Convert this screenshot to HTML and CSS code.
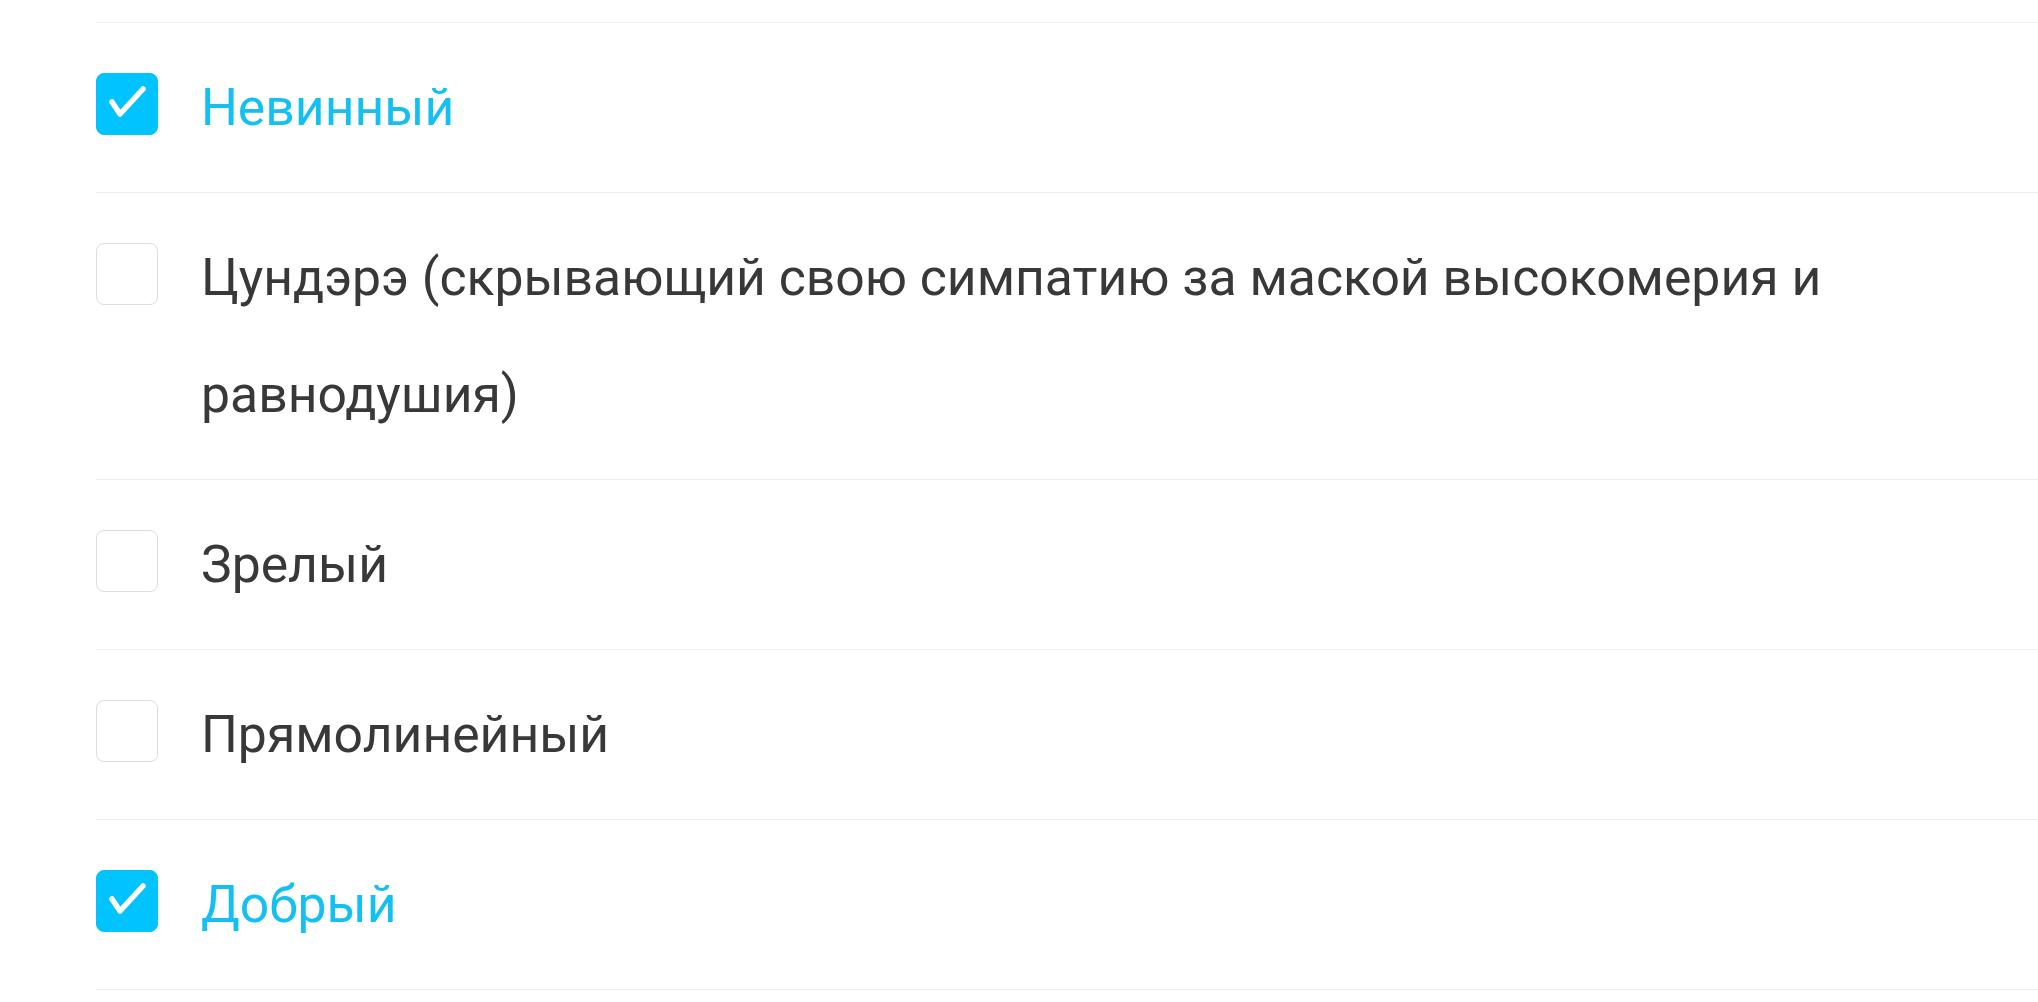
FILE: index.html
```html
<!DOCTYPE html>
<html lang="ru">
<head>
    <meta charset="UTF-8">
    <meta name="viewport" content="width=device-width, initial-scale=1.0">
    <title>Характер</title>
    <link rel="stylesheet" href="styles.css">
</head>
<body>
    <div class="list">
        <label class="item checked">
            <span class="box">
                <svg viewBox="0 0 62 62"><polyline points="16,29 24,41 47,16"/></svg>
            </span>
            <span class="text">Невинный</span>
        </label>
        <label class="item">
            <span class="box"></span>
            <span class="text">Цундэрэ (скрывающий свою симпатию за маской высокомерия и равнодушия)</span>
        </label>
        <label class="item">
            <span class="box"></span>
            <span class="text">Зрелый</span>
        </label>
        <label class="item">
            <span class="box"></span>
            <span class="text">Прямолинейный</span>
        </label>
        <label class="item checked">
            <span class="box">
                <svg viewBox="0 0 62 62"><polyline points="16,29 24,41 47,16"/></svg>
            </span>
            <span class="text">Добрый</span>
        </label>
    </div>
</body>
</html>
```

FILE: styles.css
```css
body {
    margin: 0;
    padding: 0;
    background: #fff;
    font-family: Roboto, "Noto Sans", sans-serif;
    overflow: hidden;
}
.list {
    margin-top: 22px;
    margin-left: 96px;
    width: 1942px;
    border-top: 1px solid #eeeeee;
}
.item {
    display: flex;
    align-items: flex-start;
    gap: 43px;
    padding: 26px 0;
    border-bottom: 1px solid #eeeeee;
    cursor: pointer;
}
.box {
    flex: none;
    width: 60px;
    height: 60px;
    margin-top: 24px;
    border: 1px solid #dddddd;
    border-radius: 8px;
    background: #fff;
}
.box svg {
    display: block;
    width: 62px;
    height: 62px;
    margin: -1px;
}
.box polyline {
    fill: none;
    stroke: #fff;
    stroke-width: 5.5;
    stroke-linecap: round;
    stroke-linejoin: round;
}
.text {
    font-size: 51.7px;
    line-height: 117px;
    color: #383838;
}
.checked .box {
    background: #00c3ff;
    border-color: #00c3ff;
}
.checked .text {
    color: #14bff2;
}
```
